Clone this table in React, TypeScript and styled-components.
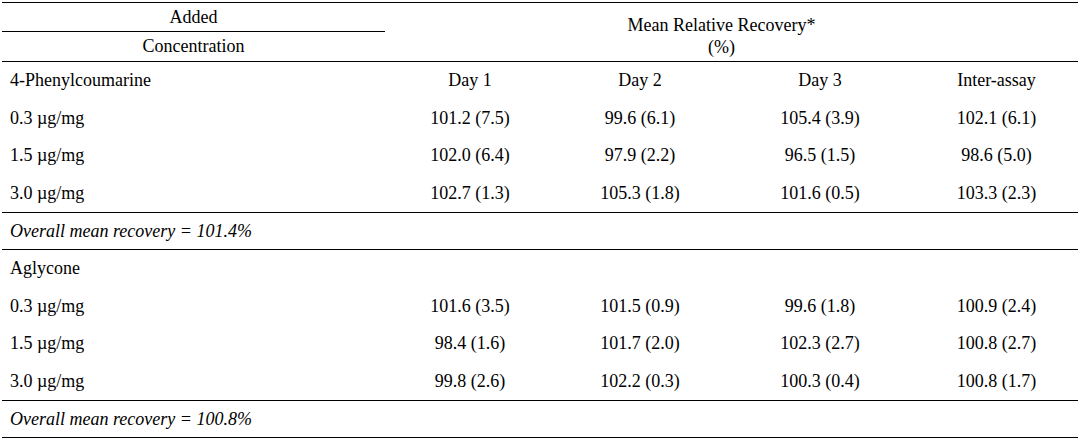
import React from 'react';
import styled, { createGlobalStyle } from 'styled-components';

const GlobalStyle = createGlobalStyle`
  html, body {
    margin: 0;
    padding: 0;
    background: #fff;
  }

  body {
    font-family: 'Liberation Serif', 'Times New Roman', serif;
    color: #000;
  }
`;

const COLUMNS = '383px 170px 170px 190px 163px';

const Table = styled.section`
  width: 1076px;
  margin: 2px 0 0 2px;
  border-top: 1px solid #000;
  font-size: 18px;
`;

const Head = styled.header`
  display: grid;
  grid-template-columns: 383px 1fr;
  border-bottom: 1px solid #000;
`;

const HeadLeft = styled.div`
  display: flex;
  flex-direction: column;
`;

const HeadCell = styled.div<{ $ruled?: boolean; $h: number }>`
  height: ${(p) => p.$h}px;
  display: flex;
  align-items: center;
  justify-content: center;
  border-bottom: ${(p) => (p.$ruled ? '1px solid #000' : 'none')};
`;

const HeadRight = styled.div`
  display: flex;
  flex-direction: column;
  align-items: center;
  justify-content: center;
  line-height: 22px;
  padding: 8px 20px 0 0;
`;

const Row = styled.div`
  display: grid;
  grid-template-columns: ${COLUMNS};
  height: 37.5px;
  align-items: center;
`;

const Label = styled.div`
  padding-left: 8px;
`;

const Value = styled.div`
  text-align: center;
`;

const Summary = styled.div`
  height: 36px;
  display: flex;
  align-items: center;
  padding-left: 8px;
  font-style: italic;
  border-top: 1px solid #000;
  border-bottom: 1px solid #000;
`;

type Group = {
  name: string;
  rows: [string, string[]][];
  overall: string;
  showDays?: boolean;
};

const groups: Group[] = [
  {
    name: '4-Phenylcoumarine',
    showDays: true,
    rows: [
      ['0.3 µg/mg', ['101.2 (7.5)', '99.6 (6.1)', '105.4 (3.9)', '102.1 (6.1)']],
      ['1.5 µg/mg', ['102.0 (6.4)', '97.9 (2.2)', '96.5 (1.5)', '98.6 (5.0)']],
      ['3.0 µg/mg', ['102.7 (1.3)', '105.3 (1.8)', '101.6 (0.5)', '103.3 (2.3)']],
    ],
    overall: 'Overall mean recovery = 101.4%',
  },
  {
    name: 'Aglycone',
    rows: [
      ['0.3 µg/mg', ['101.6 (3.5)', '101.5 (0.9)', '99.6 (1.8)', '100.9 (2.4)']],
      ['1.5 µg/mg', ['98.4 (1.6)', '101.7 (2.0)', '102.3 (2.7)', '100.8 (2.7)']],
      ['3.0 µg/mg', ['99.8 (2.6)', '102.2 (0.3)', '100.3 (0.4)', '100.8 (1.7)']],
    ],
    overall: 'Overall mean recovery = 100.8%',
  },
];

const days = ['Day 1', 'Day 2', 'Day 3', 'Inter-assay'];

export default function App() {
  return (
    <>
      <GlobalStyle />
      <Table>
        <Head>
          <HeadLeft>
            <HeadCell $ruled $h={28}>Added</HeadCell>
            <HeadCell $h={29}>Concentration</HeadCell>
          </HeadLeft>
          <HeadRight>
            <span>Mean Relative Recovery*</span>
            <span>(%)</span>
          </HeadRight>
        </Head>
        {groups.map((g) => (
          <React.Fragment key={g.name}>
            <Row>
              <Label>{g.name}</Label>
              {g.showDays && days.map((d) => <Value key={d}>{d}</Value>)}
            </Row>
            {g.rows.map(([conc, vals]) => (
              <Row key={conc}>
                <Label>{conc}</Label>
                {vals.map((v, i) => (
                  <Value key={i}>{v}</Value>
                ))}
              </Row>
            ))}
            <Summary>{g.overall}</Summary>
          </React.Fragment>
        ))}
      </Table>
    </>
  );
}
